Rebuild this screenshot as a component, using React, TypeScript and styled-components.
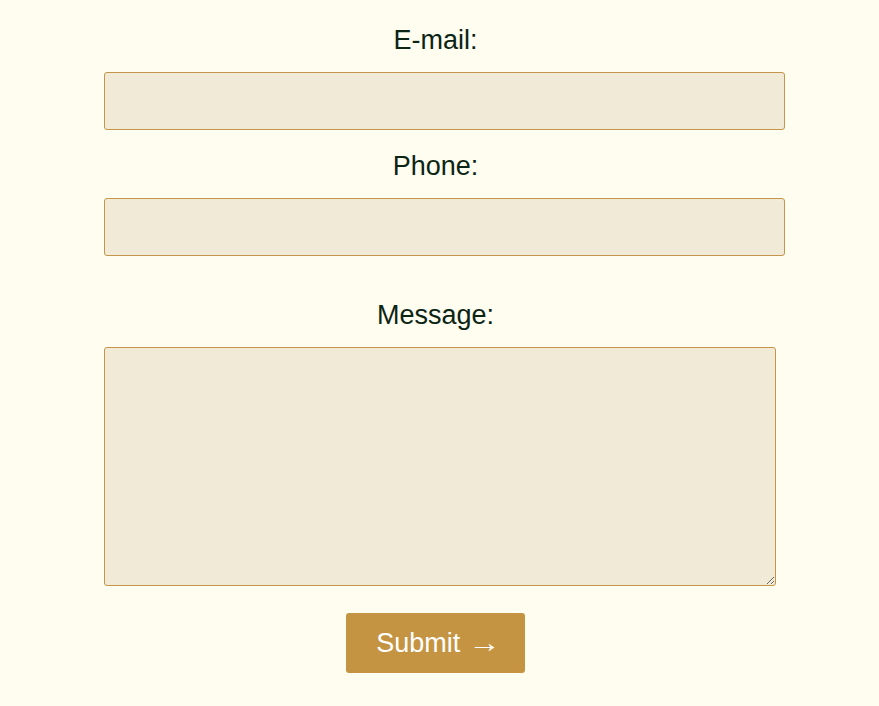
import React from "react";
import styled, { createGlobalStyle } from "styled-components";

const Global = createGlobalStyle`
  html, body {
    margin: 0;
    padding: 0;
    background: #fffdf0;
  }
  body {
    font-family: "Liberation Sans", Arial, sans-serif;
  }
`;

const Page = styled.div`
  padding: 24px 0 32px 104px;
`;

const Form = styled.form`
  width: 663px;
  display: flex;
  flex-direction: column;
  align-items: center;
`;

const Label = styled.label<{ $gapTop?: number }>`
  display: block;
  font-size: 27px;
  line-height: 31px;
  padding-top: 1px;
  color: #0b2414;
  margin-top: ${(p) => p.$gapTop ?? 0}px;
  margin-bottom: 16px;
`;

const Input = styled.input`
  align-self: flex-start;
  box-sizing: border-box;
  width: 681px;
  height: 58px;
  margin: 0;
  padding: 0 12px;
  border: 1px solid #c4944a;
  border-radius: 3px;
  background: #f0ead6;
  font-family: inherit;
  font-size: 20px;
  outline: none;
`;

const TextArea = styled.textarea`
  align-self: flex-start;
  box-sizing: border-box;
  width: 672px;
  height: 239px;
  margin: 0;
  padding: 10px 12px;
  border: 1px solid #c4944a;
  border-radius: 3px;
  background: #f0ead6;
  font-family: inherit;
  font-size: 20px;
  outline: none;
  display: block;
`;

const Button = styled.button`
  margin-top: 27px;
  box-sizing: border-box;
  width: 179px;
  height: 60px;
  border: none;
  border-radius: 3px;
  background: #c49442;
  color: #ffffff;
  font-family: inherit;
  font-size: 27px;
  cursor: pointer;
`;

const Arrow = styled.span`
  display: inline-block;
  transform: scaleX(1.2);
  transform-origin: left center;
`;

export default function App() {
  return (
    <>
      <Global />
      <Page>
        <Form onSubmit={(e) => e.preventDefault()}>
          <Label htmlFor="email">E-mail:</Label>
          <Input id="email" type="email" />
          <Label htmlFor="phone" $gapTop={20}>Phone:</Label>
          <Input id="phone" type="tel" />
          <Label htmlFor="message" $gapTop={43}>Message:</Label>
          <TextArea id="message" />
          <Button type="submit">
            Submit <Arrow>→</Arrow>
          </Button>
        </Form>
      </Page>
    </>
  );
}
